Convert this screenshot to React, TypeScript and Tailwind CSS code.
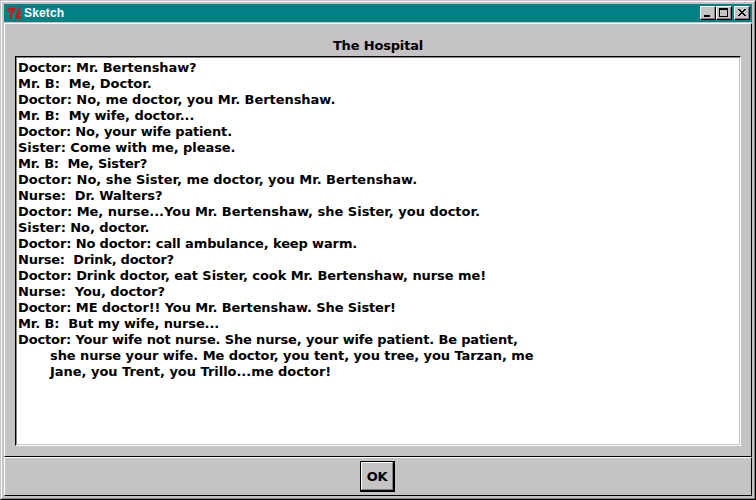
const lines: { text: string; track: string; indent?: boolean }[] = [
  { text: 'Doctor: Mr. Bertenshaw?', track: 'tracking-[-0.08px]' },
  { text: 'Mr. B:  Me, Doctor.', track: 'tracking-[-0.04px]' },
  { text: 'Doctor: No, me doctor, you Mr. Bertenshaw.', track: 'tracking-[-0.05px]' },
  { text: 'Mr. B:  My wife, doctor...', track: 'tracking-[-0.06px]' },
  { text: 'Doctor: No, your wife patient.', track: 'tracking-[-0.17px]' },
  { text: 'Sister: Come with me, please.', track: 'tracking-[-0.06px]' },
  { text: 'Mr. B:  Me, Sister?', track: 'tracking-[-0.2px]' },
  { text: 'Doctor: No, she Sister, me doctor, you Mr. Bertenshaw.', track: 'tracking-[-0.02px]' },
  { text: 'Nurse:  Dr. Walters?', track: 'tracking-[-0.08px]' },
  { text: 'Doctor: Me, nurse...You Mr. Bertenshaw, she Sister, you doctor.', track: 'tracking-[-0.01px]' },
  { text: 'Sister: No, doctor.', track: 'tracking-[-0.06px]' },
  { text: 'Doctor: No doctor: call ambulance, keep warm.', track: 'tracking-[-0.13px]' },
  { text: 'Nurse:  Drink, doctor?', track: 'tracking-[-0.25px]' },
  { text: 'Doctor: Drink doctor, eat Sister, cook Mr. Bertenshaw, nurse me!', track: 'tracking-[-0.07px]' },
  { text: 'Nurse:  You, doctor?', track: 'tracking-[-0.07px]' },
  { text: 'Doctor: ME doctor!! You Mr. Bertenshaw. She Sister!', track: 'tracking-[-0.11px]' },
  { text: 'Mr. B:  But my wife, nurse...', track: 'tracking-[-0.11px]' },
  { text: 'Doctor: Your wife not nurse. She nurse, your wife patient. Be patient,', track: 'tracking-[-0.16px]' },
  { text: 'she nurse your wife. Me doctor, you tent, you tree, you Tarzan, me', track: 'tracking-[-0.08px]', indent: true },
  { text: 'Jane, you Trent, you Trillo...me doctor!', track: 'tracking-[-0.03px]', indent: true },
];

function CaptionButton({ children, label }: { children: React.ReactNode; label: string }) {
  return (
    <button
      aria-label={label}
      className="h-[14px] w-4 border border-t-white border-l-white border-r-black border-b-black bg-[#c6c3c6] shadow-[inset_-1px_-1px_0_#848284]"
    >
      <svg width="14" height="12" viewBox="0 0 14 12" shapeRendering="crispEdges" className="block">
        {children}
      </svg>
    </button>
  );
}

export default function App() {
  return (
    <div className="h-[500px] w-[756px] overflow-hidden border border-t-[#c6c3c6] border-l-[#c6c3c6] border-r-black border-b-black bg-[#c6c3c6] font-['DejaVu_Sans',sans-serif] text-[13px] font-bold text-black">
      <div className="flex h-full flex-col border border-t-white border-l-white border-r-[#848284] border-b-[#848284] p-[2px]">
        <header className="flex h-[18px] shrink-0 items-center bg-[#008284] pr-[2px] pl-[3px]">
          <svg width="17" height="14" viewBox="0 0 17 14" fill="none" stroke="#ff0000" className="shrink-0">
            <path d="M0.5 5 L2 3 H8.5 M7 3 L4 8 L3.5 12.5" strokeWidth="2" />
            <path d="M13 1.5 L11 5 L9.5 12.5 M10 9 L13 7 L13.5 5.5 M11 9 L12 12 L14 11" strokeWidth="1.6" />
          </svg>
          <span className="font-['Liberation_Sans',Arial,sans-serif] text-[12px] leading-[18px] tracking-[0.15px] text-white">Sketch</span>
          <div className="ml-auto flex">
            <CaptionButton label="Minimize">
              <path d="M3 8h6v2h-6z" fill="#000" />
            </CaptionButton>
            <CaptionButton label="Maximize">
              <path d="M2 1h9v9h-9z M3 3v6h7v-6z" fill="#000" fillRule="evenodd" />
            </CaptionButton>
            <div className="ml-[2px] flex">
              <CaptionButton label="Close">
                <path d="M3 2h2v1h1v1h2v-1h1v-1h2v1h-1v1h-1v1h-1v1h1v1h1v1h1v1h-2v-1h-1v-1h-2v1h-1v1h-2v-1h1v-1h1v-1h1v-1h-1v-1h-1v-1h-1z" fill="#000" />
              </CaptionButton>
            </div>
          </div>
        </header>
        <main className="mt-px flex h-[434px] shrink-0 flex-col border border-t-white border-l-white border-r-black border-b-black px-[10px] pt-[14px]">
          <h1 className="h-[18px] text-center leading-4 tracking-[-0.17px]">The Hospital</h1>
          <div className="h-[390px] border border-t-black border-l-black border-r-white border-b-white">
            <div className="h-full border border-t-[#848284] border-l-[#848284] border-r-[#c6c3c6] border-b-[#c6c3c6] bg-white pt-[2px] pl-px">
              {lines.map((l) => (
                <div key={l.text} className={`h-4 leading-4 whitespace-pre ${l.indent ? 'pl-8' : ''}`}>
                  <span className={l.track}>{l.text}</span>
                </div>
              ))}
            </div>
          </div>
        </main>
        <footer className="flex h-[39px] shrink-0 justify-center border border-t-white border-l-white border-r-black border-b-black pt-[3px] pr-px">
          <button className="h-[31px] w-[35px] border border-r-2 border-b-2 border-black">
            <span className="flex h-full items-center justify-center border border-t-white border-l-white border-r-[#848284] border-b-[#848284] pt-[2px] tracking-[-0.2px]">
              OK
            </span>
          </button>
        </footer>
      </div>
    </div>
  );
}
